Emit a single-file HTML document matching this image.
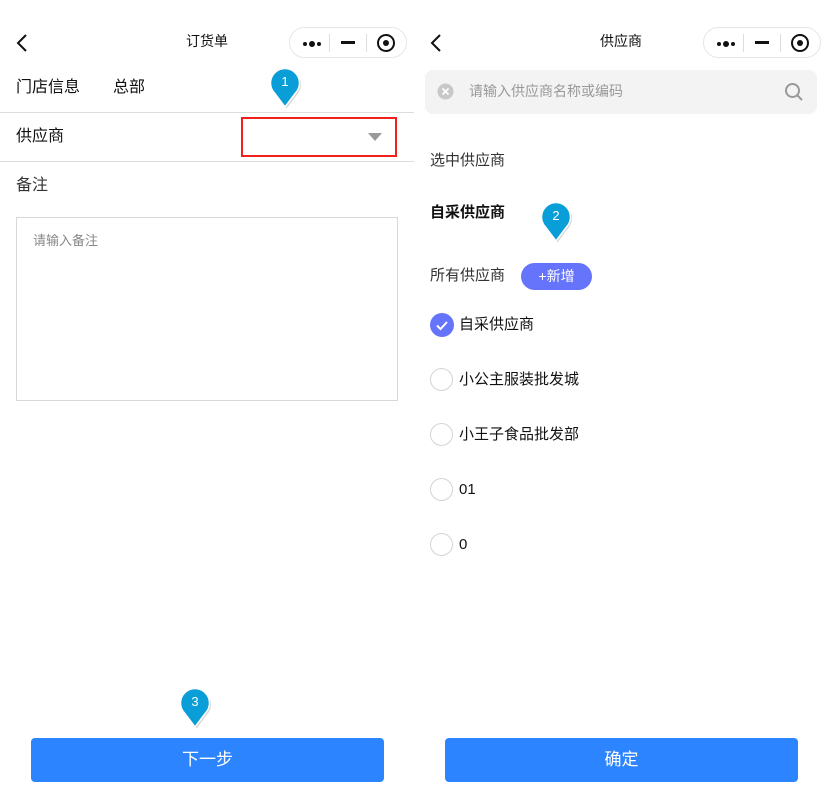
<!DOCTYPE html>
<html><head><meta charset="utf-8"><style>
*{margin:0;padding:0;box-sizing:border-box}
body{width:828px;height:800px;background:#fff;position:relative;overflow:hidden;font-family:"Liberation Sans","Noto Sans CJK SC",sans-serif;color:#111}
.a{position:absolute;white-space:nowrap;line-height:1}
.cap{position:absolute;top:27px;width:118px;height:31px;border:1px solid #e6e6e6;border-radius:16px;background:#fff}
.cap .d{position:absolute;top:14px;width:5px;height:5px;border-radius:50%;background:#111}
.cap .sep{position:absolute;top:6px;width:1px;height:18px;background:#ddd}
.cap .mn{position:absolute;top:13px;left:51px;width:14px;height:3px;background:#111}
.cap .tg{position:absolute;top:6px;left:87px;width:18px;height:18px;border:2px solid #111;border-radius:50%}
.cap .tg:after{content:"";position:absolute;left:4px;top:4px;width:6px;height:6px;border-radius:50%;background:#111}
.radio{position:absolute;left:430px;width:23px;height:23px;border:1px solid #d4d4d4;border-radius:50%}
.btn{position:absolute;top:738px;width:353px;height:44px;background:#2c84ff;border-radius:4px;color:#fff;font-size:17px;text-align:center;line-height:44px}
.li{font-size:15px;left:459px}
</style></head><body>
<!-- left -->
<svg class="a" style="left:14px;top:32px" width="16" height="22"><path d="M12 3 L4 11 L12 19" stroke="#111" stroke-width="2" fill="none"/></svg>
<div class="a" style="left:186px;top:34px;font-size:14px">订货单</div>
<div class="cap" style="left:289px"><i class="d" style="left:13px;width:4px;height:4px;top:14px"></i><i class="d" style="left:19px;top:13px;width:6px;height:6px"></i><i class="d" style="left:27px;width:4px;height:4px;top:14px"></i><i class="sep" style="left:39px"></i><i class="mn"></i><i class="sep" style="left:76px"></i><i class="tg"></i></div>
<div class="a" style="left:16px;top:80px;font-size:16px">门店信息</div>
<div class="a" style="left:113px;top:80px;font-size:16px">总部</div>
<div class="a" style="left:0;top:112px;width:414px;height:1px;background:#ddd"></div>
<div class="a" style="left:16px;top:129px;font-size:16px">供应商</div>
<div class="a" style="left:241px;top:117px;width:156px;height:40px;border:2px solid #f0201a"></div>
<svg class="a" style="left:367px;top:132px" width="16" height="10"><path d="M1 1 H15 L8 9Z" fill="#999"/></svg>
<div class="a" style="left:0;top:161px;width:414px;height:1px;background:#ddd"></div>
<div class="a" style="left:16px;top:178px;font-size:16px;color:#333">备注</div>
<div class="a" style="left:16px;top:217px;width:382px;height:184px;border:1px solid #d8d8d8"></div>
<div class="a" style="left:33px;top:234px;font-size:13px;color:#888">请输入备注</div>
<div class="btn" style="left:31px">下一步</div>
<!-- right -->
<svg class="a" style="left:428px;top:32px" width="16" height="22"><path d="M12 3 L4 11 L12 19" stroke="#111" stroke-width="2" fill="none"/></svg>
<div class="a" style="left:600px;top:34px;font-size:14px">供应商</div>
<div class="cap" style="left:703px"><i class="d" style="left:13px;width:4px;height:4px;top:14px"></i><i class="d" style="left:19px;top:13px;width:6px;height:6px"></i><i class="d" style="left:27px;width:4px;height:4px;top:14px"></i><i class="sep" style="left:39px"></i><i class="mn"></i><i class="sep" style="left:76px"></i><i class="tg"></i></div>
<div class="a" style="left:425px;top:70px;width:392px;height:44px;background:#f3f3f3;border-radius:8px"></div>
<svg class="a" style="left:437px;top:83px" width="17" height="17"><circle cx="8.5" cy="8.5" r="8" fill="#c8c8c8"/><path d="M5.5 5.5L11.5 11.5M11.5 5.5L5.5 11.5" stroke="#fff" stroke-width="1.8"/></svg>
<div class="a" style="left:469px;top:84px;font-size:14px;color:#999">请输入供应商名称或编码</div>
<svg class="a" style="left:784px;top:82px" width="20" height="20"><circle cx="8.5" cy="8.5" r="6.5" stroke="#999" stroke-width="2" fill="none"/><path d="M13 13L18 18" stroke="#999" stroke-width="2"/></svg>
<div class="a" style="left:430px;top:153px;font-size:15px;color:#333">选中供应商</div>
<div class="a" style="left:430px;top:205px;font-size:15px;font-weight:bold">自采供应商</div>
<div class="a" style="left:430px;top:268px;font-size:15px;color:#333">所有供应商</div>
<div class="a" style="left:521px;top:263px;width:71px;height:27px;background:#6574fb;border-radius:14px;color:#fff;font-size:14px;text-align:center;line-height:27px">+新增</div>
<div class="a" style="left:430px;top:313px;width:24px;height:24px;border-radius:50%;background:#6574fb"></div>
<svg class="a" style="left:430px;top:313px" width="24" height="24"><path d="M7 12.5L10.5 16L17 9" stroke="#fff" stroke-width="2" fill="none"/></svg>
<div class="a li" style="top:317px">自采供应商</div>
<div class="radio" style="top:368px"></div><div class="a li" style="top:372px">小公主服装批发城</div>
<div class="radio" style="top:423px"></div><div class="a li" style="top:427px">小王子食品批发部</div>
<div class="radio" style="top:478px"></div><div class="a li" style="top:482px">01</div>
<div class="radio" style="top:533px"></div><div class="a li" style="top:537px">0</div>
<div class="btn" style="left:445px;top:738px">确定</div>
<!-- pins -->
<svg class="a" style="left:269px;top:66px" width="36" height="46"><path d="M16 41 L5.5 27 A14.5 14.5 0 1 1 26.5 27 Z" transform="translate(1.5,1.5)" fill="#bbb" opacity=".6"/><path d="M16 41 L5.5 27 A14.5 14.5 0 1 1 26.5 27 Z" fill="#0a9ed8" stroke="#fff" stroke-width="1.5"/><text x="16" y="20" font-size="13" fill="#fff" text-anchor="middle" font-family="Liberation Sans">1</text></svg>
<svg class="a" style="left:540px;top:200px" width="36" height="46"><path d="M16 41 L5.5 27 A14.5 14.5 0 1 1 26.5 27 Z" transform="translate(1.5,1.5)" fill="#bbb" opacity=".6"/><path d="M16 41 L5.5 27 A14.5 14.5 0 1 1 26.5 27 Z" fill="#0a9ed8" stroke="#fff" stroke-width="1.5"/><text x="16" y="20" font-size="13" fill="#fff" text-anchor="middle" font-family="Liberation Sans">2</text></svg>
<svg class="a" style="left:179px;top:686px" width="36" height="46"><path d="M16 41 L5.5 27 A14.5 14.5 0 1 1 26.5 27 Z" transform="translate(1.5,1.5)" fill="#bbb" opacity=".6"/><path d="M16 41 L5.5 27 A14.5 14.5 0 1 1 26.5 27 Z" fill="#0a9ed8" stroke="#fff" stroke-width="1.5"/><text x="16" y="20" font-size="13" fill="#fff" text-anchor="middle" font-family="Liberation Sans">3</text></svg>
</body></html>
